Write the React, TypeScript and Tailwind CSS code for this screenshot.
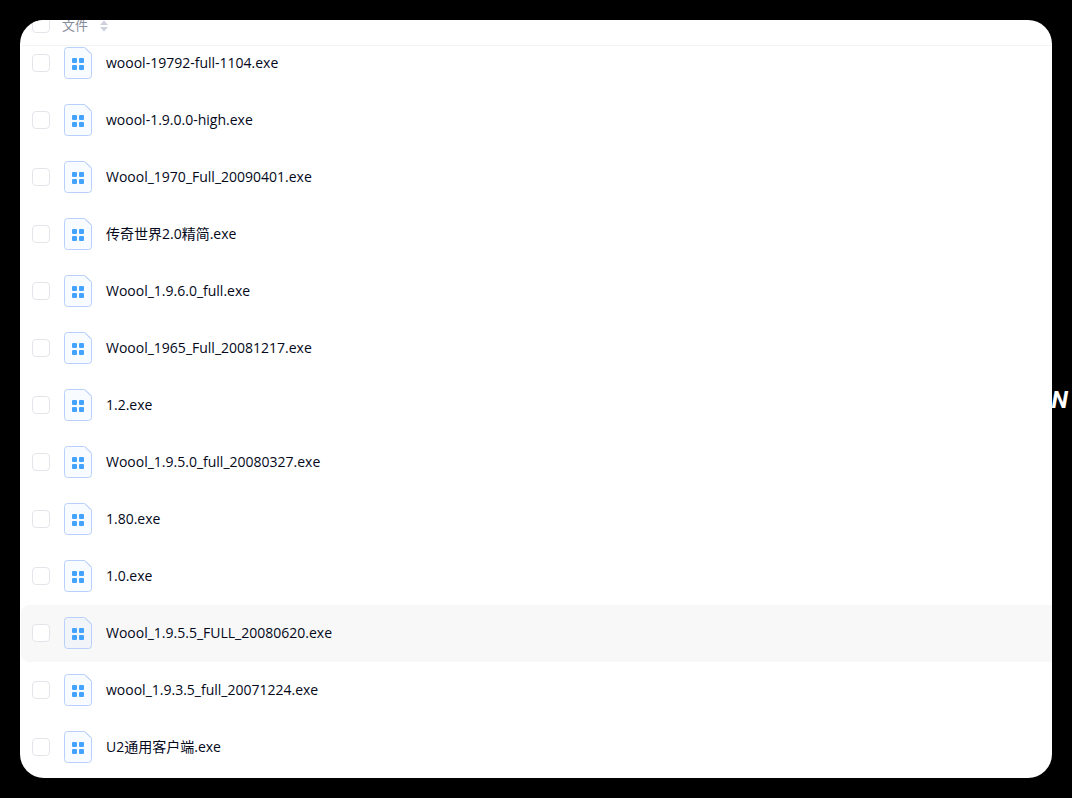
import { useState } from 'react';

const files = [
    'woool-19792-full-1104.exe',
    'woool-1.9.0.0-high.exe',
    'Woool_1970_Full_20090401.exe',
    '传奇世界2.0精简.exe',
    'Woool_1.9.6.0_full.exe',
    'Woool_1965_Full_20081217.exe',
    '1.2.exe',
    'Woool_1.9.5.0_full_20080327.exe',
    '1.80.exe',
    '1.0.exe',
    'Woool_1.9.5.5_FULL_20080620.exe',
    'woool_1.9.3.5_full_20071224.exe',
    'U2通用客户端.exe',
];

const checkboxClass =
    'block size-[18px] shrink-0 appearance-none rounded border border-[#e3e5ea] bg-white checked:border-[#40a0ff] checked:bg-[#40a0ff]';

function ExeIcon() {
    return (
        <svg className="h-8 w-7 shrink-0" viewBox="0 0 28 32" fill="none" aria-hidden="true">
            <path
                d="M3.5.5H20a2 2 0 0 1 1.3.5L26.8 6.2a2 2 0 0 1 .7 1.5V28.5a3 3 0 0 1-3 3h-21a3 3 0 0 1-3-3v-25a3 3 0 0 1 3-3Z"
                fill="#4a96ff"
                fillOpacity="0.04"
                stroke="#b9d0fb"
            />
            <path d="M21 1.2 26.8 6.8" stroke="#b9d0fb" />
            <g fill="#43a3ff">
                <rect x="8" y="11" width="5" height="5" rx="1.1" />
                <rect x="15" y="11" width="5" height="5" rx="1.1" />
                <rect x="8" y="18" width="5" height="5" rx="1.1" />
                <rect x="15" y="18" width="5" height="5" rx="1.1" />
            </g>
        </svg>
    );
}

export default function App() {
    const [selected, setSelected] = useState<string[]>([]);
    const active = 'Woool_1.9.5.5_FULL_20080620.exe';

    const toggle = (name: string) => {
        setSelected(selected.includes(name) ? selected.filter((n) => n !== name) : [...selected, name]);
    };

    return (
        <main className="relative min-h-screen bg-black p-5 font-['Open_Sans','Noto_Sans_CJK_SC',sans-serif]">
            <span className="absolute right-1 top-[384px] font-['Roboto',sans-serif] text-2xl font-bold italic text-white">N</span>
            <section className="relative overflow-hidden rounded-3xl bg-white pb-0.5 pl-px">
                <table className="w-full border-separate border-spacing-0 text-left">
                    <thead>
                        <tr>
                            <th className="border-b border-[#f3f4f6] p-0 font-normal">
                                <div className="-mt-[18px] flex h-[43px] items-center pl-[11px]">
                                    <input
                                        type="checkbox"
                                        aria-label="全选"
                                        className={checkboxClass}
                                        checked={selected.length === files.length}
                                        onChange={(e) => setSelected(e.target.checked ? files : [])}
                                    />
                                    <button type="button" className="ml-3 flex items-center gap-3 pt-1 text-[13px] leading-none text-[#878c9c]">
                                        文件
                                        <svg className="h-3 w-2" viewBox="0 0 8 12" fill="#cfd0df" aria-hidden="true">
                                            <path d="M4 .5 8 5H0ZM4 11.5 0 7h8Z" />
                                        </svg>
                                    </button>
                                </div>
                            </th>
                        </tr>
                    </thead>
                    <tbody className="[&>tr:first-child_label]:-mt-[11px]">
                        {files.map((name) => (
                            <tr key={name}>
                                <td className={name === active ? 'rounded-l-lg bg-[#f8f8f8] p-0' : 'p-0'}>
                                    <label className="flex h-[57px] items-center pb-0.5 pl-[11px]">
                                        <input
                                            type="checkbox"
                                            className={checkboxClass}
                                            checked={selected.includes(name)}
                                            onChange={() => toggle(name)}
                                        />
                                        <span className="ml-3.5">
                                            <ExeIcon />
                                        </span>
                                        <span className="ml-3.5 text-sm text-[#03081a]">{name}</span>
                                    </label>
                                </td>
                            </tr>
                        ))}
                    </tbody>
                </table>
            </section>
        </main>
    );
}
